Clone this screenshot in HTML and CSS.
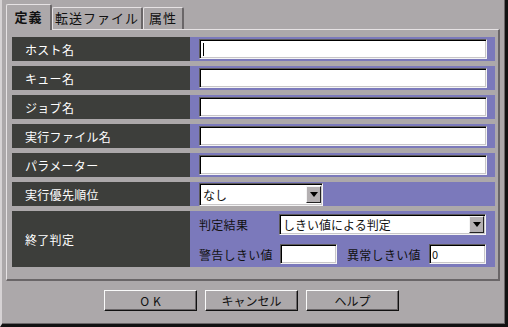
FILE: index.html
```html
<!DOCTYPE html>
<html lang="ja">
<head>
    <meta charset="UTF-8">
    <title>定義</title>
    <link rel="stylesheet" href="styles.css">
</head>
<body>
    <div class="win">
        <ul class="tabs">
            <li class="tab on" style="width:46px">定義</li>
            <li class="tab" style="width:91px">転送ファイル</li>
            <li class="tab" style="width:41px">属性</li>
        </ul>
        <div class="panel">
            <div class="form">
                <div class="lbl">ホスト名</div>
                <div class="val"><div class="fld wide"><span class="caret"></span></div></div>
                <div class="lbl">キュー名</div>
                <div class="val"><div class="fld wide"></div></div>
                <div class="lbl">ジョブ名</div>
                <div class="val"><div class="fld wide"></div></div>
                <div class="lbl">実行ファイル名</div>
                <div class="val"><div class="fld wide"></div></div>
                <div class="lbl">パラメーター</div>
                <div class="val"><div class="fld wide"></div></div>
                <div class="lbl">実行優先順位</div>
                <div class="val">
                    <div class="fld sel prio">なし<span class="arrow"></span></div>
                </div>
                <div class="lbl">終了判定</div>
                <div class="val end">
                    <div class="line">
                        <span class="sub w80">判定結果</span>
                        <div class="fld sel judge">しきい値による判定<span class="arrow"></span></div>
                    </div>
                    <div class="line second">
                        <span class="sub w81">警告しきい値</span>
                        <div class="fld small"></div>
                        <span class="sub w82">異常しきい値</span>
                        <div class="fld small">0</div>
                    </div>
                </div>
            </div>
        </div>
        <div class="btns">
            <button class="btn ok">OK</button>
            <button class="btn">キャンセル</button>
            <button class="btn">ヘルプ</button>
        </div>
    </div>
</body>
</html>
```

FILE: styles.css
```css
body{
    margin: 0;
    background-color: #aca8aa;
    font-family: "Noto Sans CJK JP", "DejaVu Sans", sans-serif;
    font-size: 12px;
}
ul{
    margin: 0;
    padding: 0;
    list-style: none;
}
.win{
    width: 508px;
    height: 327px;
    box-sizing: border-box;
    border-left: 2px solid #d6d2d4;
    border-right: 3px solid #121212;
    border-bottom: 3px solid #121212;
    box-shadow: inset -1px -1px 0 #6a6668;
    background-color: #aca8aa;
}
.tabs{
    display: flex;
    padding: 4px 0 0 4px;
    height: 25px;
    align-items: flex-end;
}
.tab{
    box-sizing: border-box;
    height: 22px;
    line-height: 20px;
    text-align: center;
    color: #111;
    font-size: 13px;
    letter-spacing: 1px;
    border-top: 1px solid #e6e2e4;
    border-left: 1px solid #e6e2e4;
    border-right: 2px solid #6a6668;
    border-radius: 2px 2px 0 0;
}
.tab.on{
    height: 26px;
    line-height: 24px;
    font-weight: bold;
    margin-bottom: -1px;
    position: relative;
    z-index: 1;
    background-color: #aca8aa;
}
.panel{
    box-sizing: border-box;
    margin-left: 4px;
    width: 494px;
    height: 252px;
    padding: 7px 0 0 5px;
    border-top: 1px solid #e6e2e4;
    border-left: 1px solid #e6e2e4;
    border-right: 2px solid #6a6668;
    border-bottom: 2px solid #6a6668;
}
.form{
    display: grid;
    grid-template-columns: 178px 305px;
    grid-template-rows: repeat(6, 24px) 56px;
    row-gap: 5px;
}
.lbl{
    background-color: #3d3e3b;
    color: #fff;
    padding-left: 13px;
    letter-spacing: 0.3px;
    display: flex;
    align-items: center;
}
.val{
    background-color: #7b79bb;
    padding: 2px 0 0 9px;
}
.fld{
    box-sizing: border-box;
    height: 20px;
    background-color: #fff;
    border: 1px solid;
    border-color: #5c5a5c #f4f4f4 #f4f4f4 #5c5a5c;
    box-shadow: inset 1px 1px 0 #000, inset -1px -1px 0 #c8c6c8;
    color: #111;
    line-height: 18px;
    padding-left: 3px;
    position: relative;
}
.wide{
    width: 288px;
}
.caret{
    position: absolute;
    left: 3px;
    top: 3px;
    width: 1px;
    height: 13px;
    background-color: #000;
}
.sel{
    display: flex;
    justify-content: space-between;
    align-items: center;
    padding-right: 1px;
}
.prio{
    width: 124px;
    height: 23px;
    margin-top: -1px;
}
.judge{
    width: 207px;
    height: 21px;
}
.arrow{
    width: 15px;
    height: 17px;
    box-sizing: border-box;
    background-color: #b4b0b2;
    border: 1px solid;
    border-color: #f4f4f4 #222 #222 #f4f4f4;
    display: flex;
    align-items: center;
    justify-content: center;
}
.arrow::after{
    content: "";
    border-left: 4px solid transparent;
    border-right: 4px solid transparent;
    border-top: 5px solid #000;
}
.end{
    padding-top: 3px;
}
.line{
    display: flex;
    align-items: center;
    color: #111;
}
.second{
    margin-top: 9px;
}
.sub{
    display: inline-block;
    letter-spacing: 0.3px;
}
.w80{
    width: 80px;
}
.w81{
    width: 81px;
}
.w82{
    width: 82px;
    margin-left: 10px;
}
.small{
    width: 57px;
    padding-left: 2px;
    font-size: 11px;
}
.btns{
    display: flex;
    justify-content: center;
    gap: 8px;
    margin-top: 9px;
    padding-right: 4px;
}
.btn{
    width: 93px;
    height: 21px;
    padding: 0;
    background-color: #aca8aa;
    border: 1px solid;
    border-color: #fafafa #111 #111 #fafafa;
    box-shadow: inset -1px -1px 0 #6a6668;
    font-family: "Noto Sans CJK JP", "DejaVu Sans", sans-serif;
    font-size: 12px;
    color: #111;
}
.ok{
    letter-spacing: 4px;
    text-indent: 4px;
}
```
